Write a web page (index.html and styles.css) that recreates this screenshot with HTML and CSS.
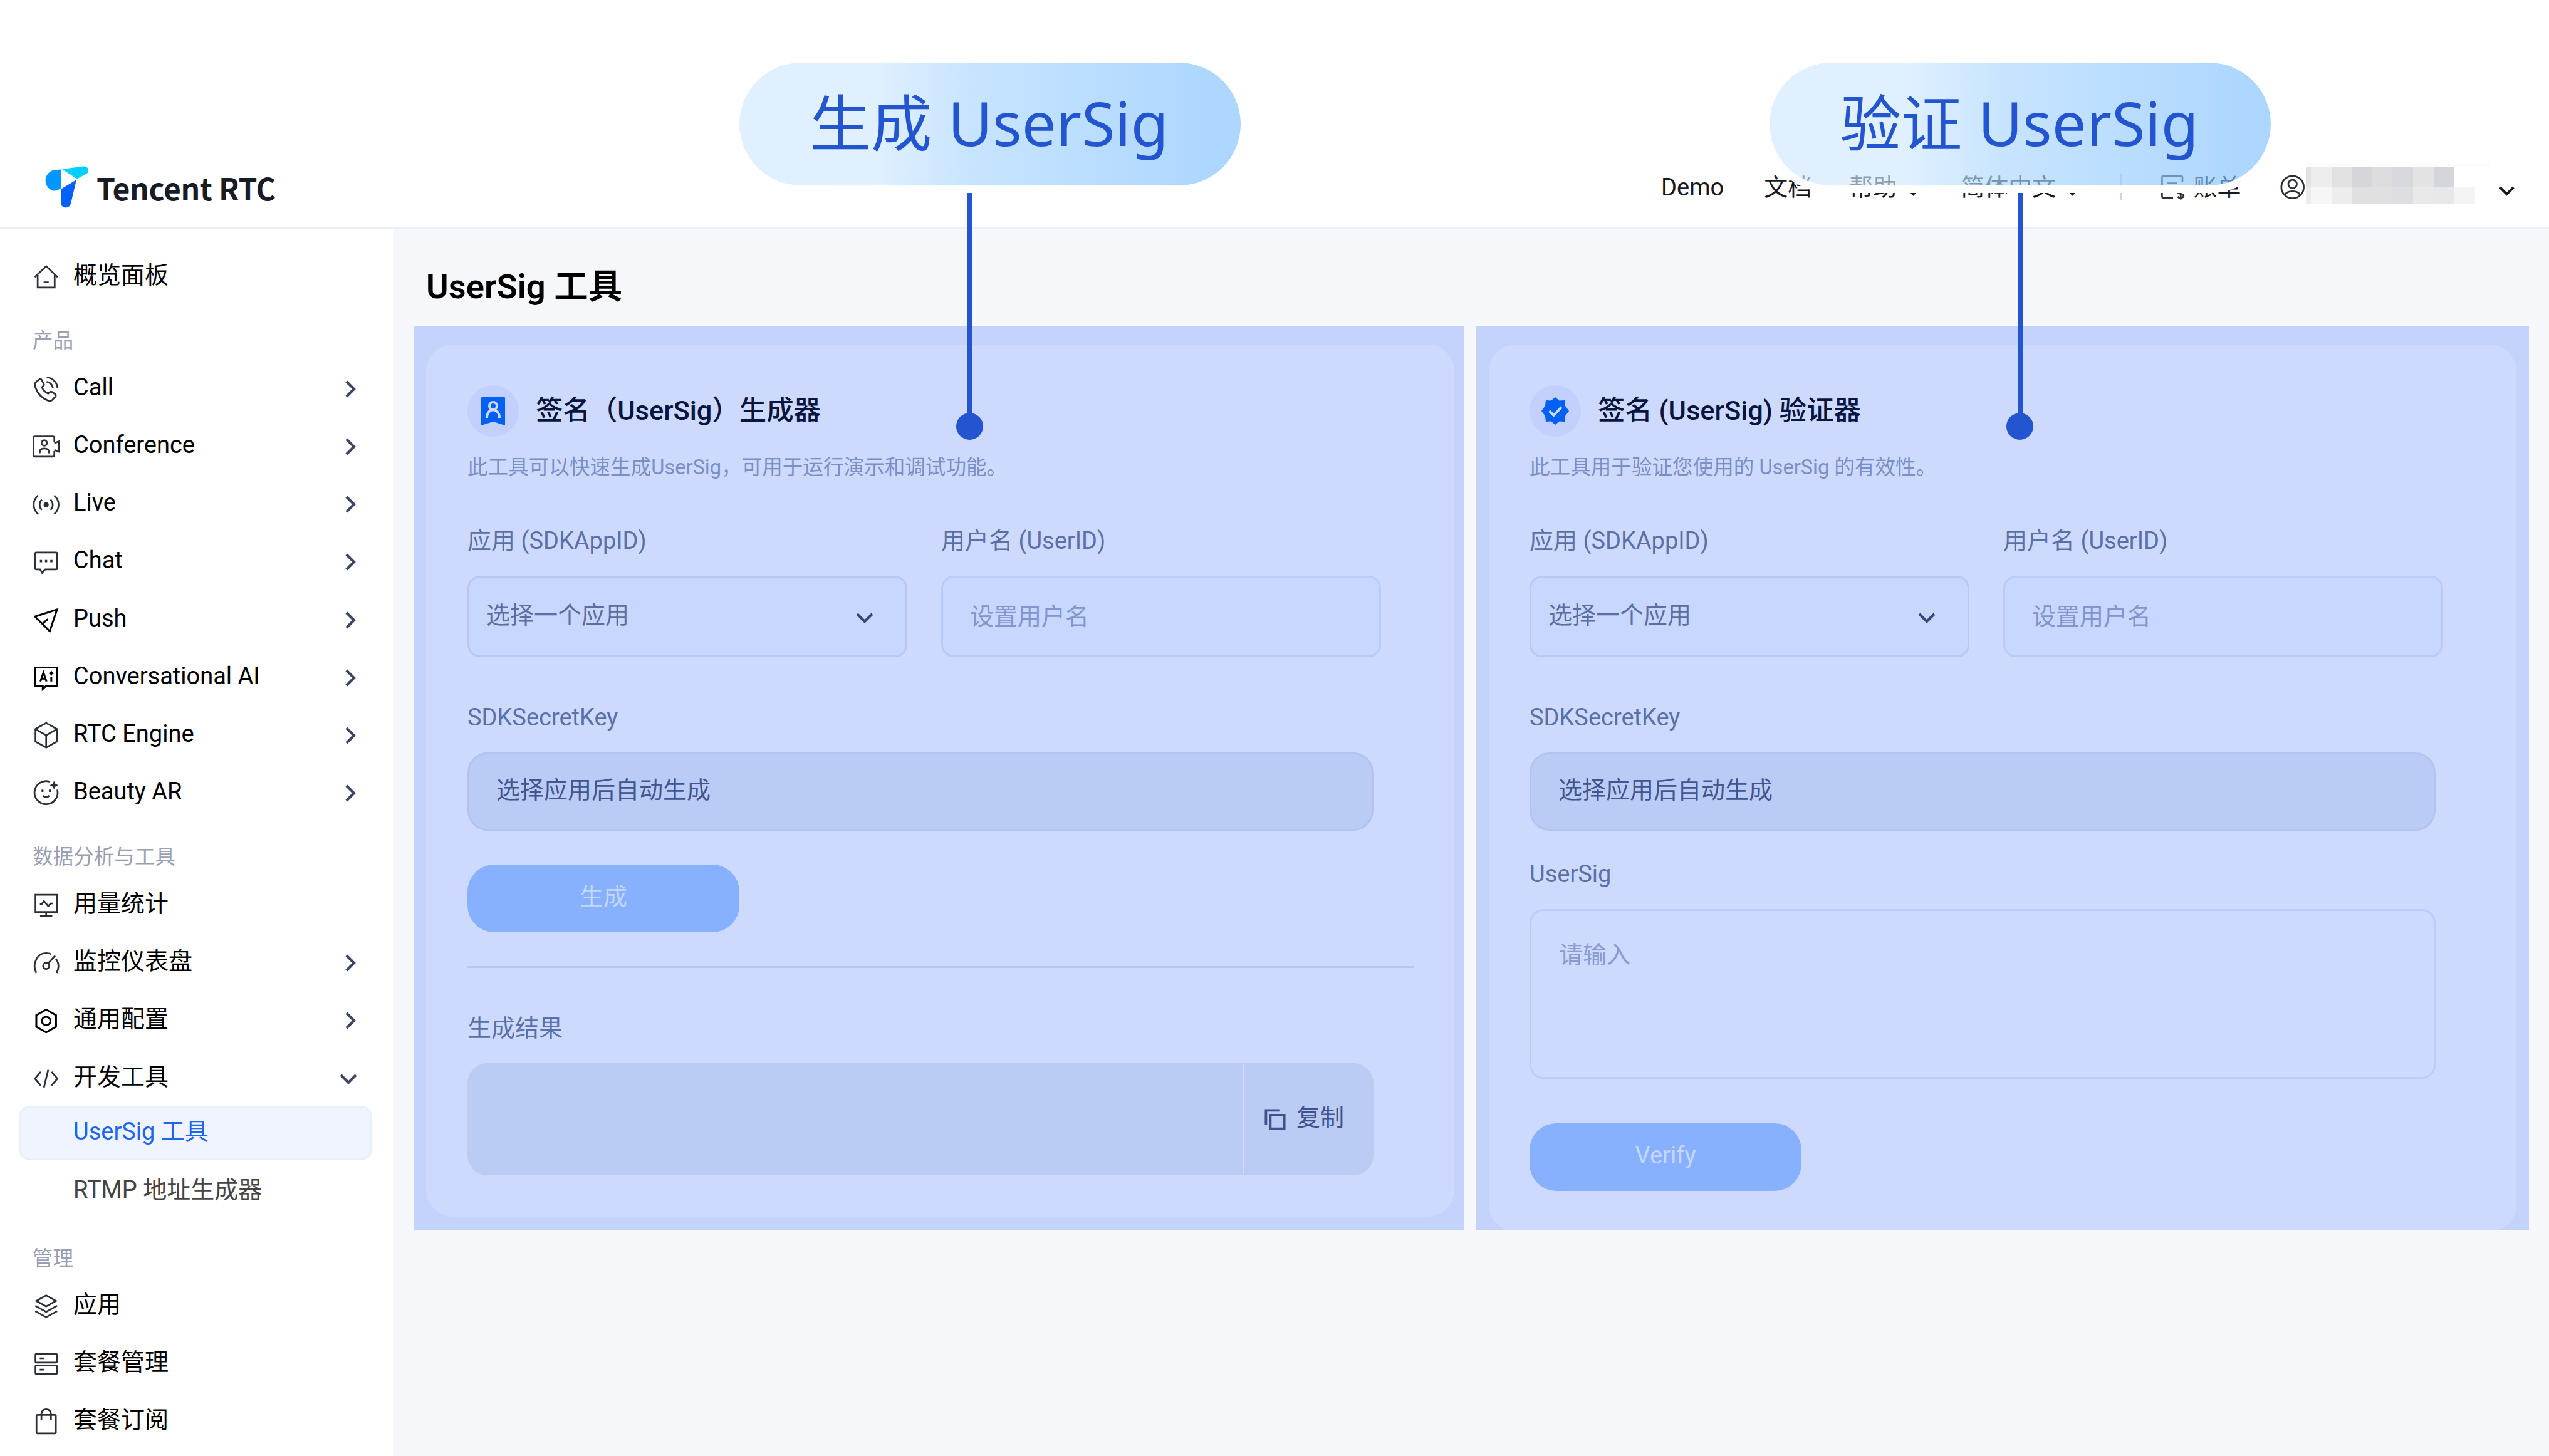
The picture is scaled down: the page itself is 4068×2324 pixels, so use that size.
FILE: index.html
```html
<!DOCTYPE html>
<html lang="zh-CN">
<head>
  <meta charset="UTF-8">
  <meta name="viewport" content="width=device-width, initial-scale=1.0">
  <title>UserSig 工具 - Tencent RTC</title>
  <link rel="stylesheet" href="styles.css">
</head>
<body>
  <!-- shared arrows -->
  <svg class="defs" width="0" height="0">
    <symbol id="right" viewBox="0 0 16 16"><path d="M6.300 4l4 4-4 4"/></symbol>
    <symbol id="down" viewBox="0 0 16 16"><path d="M4 6l4 4 4-4"/></symbol>
  </svg>

  <header class="header">
    <a class="logo">
      <svg class="logo-mark" viewBox="0 0 72 67">
        <path fill="#0096ff" d="M28 5.500v30C24 38.500 20 40 16 39.500A17 17 0 0 1 17 6.500z"/>
        <path fill="#00cfff" d="M30 5L64 .5c8-.5 11 8 5 12L54 20.500z"/>
        <path fill="#0061ff" d="M28 37L53 22l-9 38c-2 8-14 9-16 0z"/>
      </svg>
      <span class="logo-text">Tencent RTC</span>
    </a>
    <nav class="topnav">
      <a class="demo">Demo</a>
      <a class="docs">文档</a>
      <a class="help">帮助<svg class="caret"><use href="#down"/></svg></a>
      <a class="lang">简体中文<svg class="caret"><use href="#down"/></svg></a>
      <span class="split"></span>
      <a class="bill">
        <svg class="icon" viewBox="0 0 16 16"><path d="M8.500 14.300H2.800a.8.800 0 0 1-.8-.8V2.300a.8.800 0 0 1 .8-.8h10.400a.8.800 0 0 1 .8.800v2.500M5 5.800h6M5 9h3.500"/><path d="M14.600 10.200c-.8-.9-3.400-.7-3.300.7.100 1.500 3.400.8 3.400 2.300 0 1.300-2.700 1.500-3.500.4M13 9v6.300"/></svg>
        账单
      </a>
      <a class="account">
        <svg class="icon" viewBox="0 0 16 16"><circle cx="8" cy="8" r="6.600"/><circle cx="8" cy="6.200" r="2.500"/><path d="M3.600 12.600c.6-1.600 2-2.100 4.400-2.100s3.800.5 4.400 2.100"/></svg>
      </a>
      <svg class="masked" viewBox="0 0 294 66">
        <path fill="#fcfcfc" d="M0 0h294v6H0z"/>
        <path fill="#e3e3e3" d="M0 6h8v32H0z"/>
        <path fill="#ededed" d="M8 6h33v32H8z"/>
        <path fill="#e1e1e3" d="M41 6h32v32H41z"/>
        <path fill="#d5d6da" d="M73 6h33v32H73z"/>
        <path fill="#dddde0" d="M106 6h32v32h-32z"/>
        <path fill="#d8d9df" d="M138 6h33v32h-33z"/>
        <path fill="#e3e3e3" d="M171 6h33v32h-33z"/>
        <path fill="#d5d6db" d="M204 6h33v32h-33z"/>
        <path fill="#ececec" d="M0 38h8v28H0z"/>
        <path fill="#f6f6f6" d="M8 38h33v28H8z"/>
        <path fill="#ededed" d="M41 38h32v28H41z"/>
        <path fill="#e0e0e0" d="M73 38h65v28H73z"/>
        <path fill="#dcdee2" d="M138 38h33v28h-33z"/>
        <path fill="#e9e9e9" d="M171 38h33v28h-33z"/>
        <path fill="#e6e8e9" d="M204 38h33v28h-33z"/>
        <path fill="#f4f4f4" d="M237 38h33v28h-33z"/>
      </svg>
      <svg class="caret caret-user"><use href="#down"/></svg>
    </nav>
  </header>

  <div class="layout">
    <aside class="sidebar">
      <a class="item">
        <svg class="icon" viewBox="0 0 16 16"><path d="M1.300 8.200L8 1.800l6.700 6.400M3 7v7.300h10V7M6.500 11.300h3"/></svg>
        <span>概览面板</span>
      </a>

      <div class="group">产品</div>
      <a class="item">
        <svg class="icon" viewBox="0 0 16 16"><path d="M3.900 2.500l-2 1.600c-.7.700-.6 1.900-.2 3.100 1.300 3.600 4.200 6.600 7.800 7.900.8.200 1.500 0 2-.5l1.900-2c.4-.5.3-1.100-.1-1.500l-1.900-1.300c-.5-.3-1-.2-1.400.2l-.9.800C7.500 10 6.200 8.700 5.500 7.100l.9-.9c.4-.4.4-.9.1-1.300L5.300 2.700c-.3-.5-1-.6-1.400-.2zM8.300 1.200c3.400.2 6.200 3 6.400 6.400M8.300 3.900c2 .2 3.500 1.700 3.700 3.700"/></svg>
        <span>Call</span>
        <svg class="arrow"><use href="#right"/></svg>
      </a>
      <a class="item">
        <svg class="icon" viewBox="0 0 16 16"><path d="M12.800 5.500V2.900a.8.800 0 0 0-.8-.8H1.400a.8.800 0 0 0-.8.800v10.300c0 .4.300.8.800.8H12c.5 0 .8-.4.800-.8v-2.500M12.800 6l2.600-1v6l-2.600-1"/><circle cx="6.900" cy="5.900" r="1.600"/><path d="M4.200 12v-.8c0-1.300.9-2 2.700-2s2.700.7 2.700 2v.8"/></svg>
        <span>Conference</span>
        <svg class="arrow"><use href="#right"/></svg>
      </a>
      <a class="item">
        <svg class="icon" viewBox="0 0 16 16"><circle cx="8" cy="8" r="1" fill="currentColor"/><path d="M5.500 5c-1.800 1.600-1.800 4.400 0 6M10.500 5c1.800 1.600 1.800 4.400 0 6M3.300 2.500C-.2 5.500-.2 10.500 3.300 13.500M12.700 2.500c3.500 3 3.500 8 0 11"/></svg>
        <span>Live</span>
        <svg class="arrow"><use href="#right"/></svg>
      </a>
      <a class="item">
        <svg class="icon" viewBox="0 0 16 16"><path d="M2.200 2.200h11.600a.6.600 0 0 1 .6.600v8.700a.6.600 0 0 1-.6.600H7.500l-1.900 2-1.200-2H2.200a.6.600 0 0 1-.6-.6V2.800a.6.600 0 0 1 .6-.6z"/><path class="dots" d="M4.300 7.200h1.300M7.300 7.200h1.300M10.400 7.200h1.300"/></svg>
        <span>Chat</span>
        <svg class="arrow"><use href="#right"/></svg>
      </a>
      <a class="item">
        <svg class="icon black" viewBox="0 0 16 16"><path d="M14.400 1.800L1.400 6l8.700 8.600zM5.800 10.200L9 7.500"/></svg>
        <span>Push</span>
        <svg class="arrow"><use href="#right"/></svg>
      </a>
      <a class="item">
        <svg class="icon black" viewBox="0 0 16 16"><path d="M1.500 2h13v10.800H8l-2 1.900V12.800H1.500z"/><path d="M4.600 10.200L6.400 5l1.800 5.200M5.200 8.600h2.400M11 7.700v2.500"/><path fill="currentColor" stroke="none" d="M11 3.600l.6 1.200 1.200.6-1.200.6-.6 1.200-.6-1.200-1.200-.6 1.200-.6z"/></svg>
        <span>Conversational AI</span>
        <svg class="arrow"><use href="#right"/></svg>
      </a>
      <a class="item">
        <svg class="icon" viewBox="0 0 16 16"><path d="M8 .8l6.300 3.500v7.400L8 15.200l-6.300-3.500V4.300zM1.700 4.400L8 7.900l6.300-3.500M8 7.900v7.300"/></svg>
        <span>RTC Engine</span>
        <svg class="arrow"><use href="#right"/></svg>
      </a>
      <a class="item">
        <svg class="icon" viewBox="0 0 16 16"><path d="M10.200 1.400A6.800 6.800 0 1 0 14.500 6M6.200 9.500c.7 1.200 2.900 1.200 3.600 0"/><path class="dots" d="M5.300 6.700h1.100M9.600 6.700h1.100"/><path fill="currentColor" stroke="none" d="M12.600.9l.8 1.700 1.700.8-1.700.8-.8 1.700-.8-1.700-1.700-.8 1.700-.8z"/></svg>
        <span>Beauty AR</span>
        <svg class="arrow"><use href="#right"/></svg>
      </a>

      <div class="group">数据分析与工具</div>
      <a class="item">
        <svg class="icon" viewBox="0 0 16 16"><path d="M1.700 1.900h12.600V12H1.700zM4.400 14.400h7.200M8 12v2.400M4.300 7.500h1L6.700 5.600l2.500 3L10.600 7h1.200"/></svg>
        <span>用量统计</span>
      </a>
      <a class="item">
        <svg class="icon" viewBox="0 0 16 16"><path d="M2.200 14C-.6 8.500 2.900 2.300 8 2.300c1 0 2 .2 2.800.6M13.700 5.600c1.900 2.600 1.900 5.700.4 8.400M9.100 8.400l4.200-4.600"/><circle cx="8" cy="9.900" r="1.800"/></svg>
        <span>监控仪表盘</span>
        <svg class="arrow"><use href="#right"/></svg>
      </a>
      <a class="item">
        <svg class="icon black" viewBox="0 0 16 16"><path d="M8 1.300l5.800 3.300v6.800L8 14.700l-5.800-3.300V4.600z"/><circle cx="8" cy="8" r="2.500"/></svg>
        <span>通用配置</span>
        <svg class="arrow"><use href="#right"/></svg>
      </a>
      <a class="item">
        <svg class="icon" viewBox="0 0 16 16"><path d="M4.800 4L1.400 8l3.400 4M11.200 4l3.400 4-3.400 4M9.200 2.800L6.700 13.200"/></svg>
        <span>开发工具</span>
        <svg class="arrow arrow-open"><use href="#down"/></svg>
      </a>
      <a class="subitem active">UserSig 工具</a>
      <a class="subitem">RTMP 地址生成器</a>

      <div class="group group-last">管理</div>
      <a class="item">
        <svg class="icon" viewBox="0 0 16 16"><path d="M8 1.700L13.800 5 8 8.200 2.200 5zM1.600 7.800L8 11.400l6.400-3.600M1.600 11L8 14.500l6.400-3.500"/></svg>
        <span>应用</span>
      </a>
      <a class="item">
        <svg class="icon" viewBox="0 0 16 16"><rect x="1.700" y="2.200" width="12.600" height="5.100" rx=".7"/><rect x="1.700" y="9" width="12.600" height="5.100" rx=".7"/><path d="M4.200 4.800h2.500M4.200 11.500h2.500"/></svg>
        <span>套餐管理</span>
      </a>
      <a class="item">
        <svg class="icon" viewBox="0 0 16 16"><rect x="2.300" y="4.200" width="11.400" height="10.900" rx=".6"/><path d="M5.200 7V3.600C5.200-.1 10.800-.1 10.800 3.600V7"/></svg>
        <span>套餐订阅</span>
      </a>
    </aside>

    <main class="main">
      <h1>UserSig 工具</h1>
      <div class="panels">
        <section class="panel panel-left">
          <div class="card">
            <div class="card-head">
              <span class="badge">
                <svg viewBox="0 0 38 46"><path fill="#0060f5" d="M3 0h32a3 3 0 0 1 3 3v43l-19-6-19 6V3a3 3 0 0 1 3-3z"/><g fill="none" stroke="#cddafe" stroke-width="4"><circle cx="19" cy="15" r="6"/><path d="M9 34c0-17 20-17 20 0"/></g></svg>
              </span>
              <h2>签名（UserSig）生成器</h2>
            </div>
            <p class="desc">此工具可以快速生成UserSig，可用于运行演示和调试功能。</p>
            <div class="row">
              <div class="field">
                <label>应用 (SDKAppID)</label>
                <div class="select">选择一个应用<svg><use href="#down"/></svg></div>
              </div>
              <div class="field">
                <label>用户名 (UserID)</label>
                <div class="input">设置用户名</div>
              </div>
            </div>
            <label class="label-key">SDKSecretKey</label>
            <div class="readonly">选择应用后自动生成</div>
            <div class="button">生成</div>
            <div class="divider"></div>
            <label class="label-result">生成结果</label>
            <div class="result">
              <div class="copy">
                <svg viewBox="0 0 16 16"><path d="M1.500 11.500v-10h9.500M4.600 4.800h9.900v9.700H4.600z"/></svg>
                复制
              </div>
            </div>
          </div>
        </section>

        <section class="panel panel-right">
          <div class="card">
            <div class="card-head">
              <span class="badge">
                <svg viewBox="0 0 44 44"><path fill="#0060f5" d="M22 0l6.500 5.500 8.500-.5 1 9L44 22l-6 8-1 9-8.500-.5L22 44l-6.500-5.500-8.500.5-1-9L0 22l6-8 1-9 8.500.5z"/><path fill="none" stroke="#cddafe" stroke-width="4" d="M12.500 22l7 7L32 16"/></svg>
              </span>
              <h2>签名 (UserSig) 验证器</h2>
            </div>
            <p class="desc">此工具用于验证您使用的 UserSig 的有效性。</p>
            <div class="row">
              <div class="field">
                <label>应用 (SDKAppID)</label>
                <div class="select">选择一个应用<svg><use href="#down"/></svg></div>
              </div>
              <div class="field">
                <label>用户名 (UserID)</label>
                <div class="input">设置用户名</div>
              </div>
            </div>
            <label class="label-key">SDKSecretKey</label>
            <div class="readonly">选择应用后自动生成</div>
            <label class="label-sig">UserSig</label>
            <div class="textarea">请输入</div>
            <div class="button button-verify">Verify</div>
          </div>
        </section>
      </div>
    </main>
  </div>

  <!-- callouts over the page -->
  <div class="callout callout-generate">
    <div class="pill">生成 UserSig</div>
    <div class="line"></div>
    <div class="dot"></div>
  </div>
  <div class="callout callout-verify">
    <div class="pill">验证 UserSig</div>
    <div class="line"></div>
    <div class="dot"></div>
  </div>
</body>
</html>
```
FILE: styles.css
```css
* {
  box-sizing: border-box;
}

body {
  margin: 0;
  width: 4068px;
  height: 2324px;
  overflow: hidden;
  position: relative;
  background: #fff;
  color: #000;
  font-family: Roboto, "Noto Sans CJK SC", sans-serif;
  font-size: 38px;
  line-height: 52px;
}

h1, h2, p {
  margin: 0;
}

svg {
  display: block;
  flex: none;
}

label {
  display: block;
  color: #5c70a8;
}

.defs {
  position: absolute;
}

.icon {
  width: 43.4px;
  height: 43.4px;
  fill: none;
  stroke: #2a2f3a;
  color: #2a2f3a;
  stroke-width: 1;
}

.icon.black {
  stroke: #000;
  color: #000;
  stroke-width: 1.1;
}

.icon .dots {
  stroke-width: 1.4;
}

/* header */
.header {
  display: flex;
  justify-content: space-between;
  height: 366px;
  padding: 234px 46px 0 69px;
  border-bottom: 3px solid #ebeff7;
}

.logo {
  display: flex;
  height: 129px;
  gap: 13px;
  align-items: center;
}

.logo-mark {
  width: 72px;
  height: 67px;
}

.logo-text {
  font-family: "Noto Sans CJK SC", sans-serif;
  font-size: 48px;
  font-weight: 700;
  letter-spacing: -0.4px;
  color: #171c26;
}

.topnav {
  display: flex;
  align-items: center;
  height: 129px;
  color: #16181d;
}

.topnav a {
  display: flex;
  align-items: center;
}

.caret {
  width: 43px;
  height: 43px;
  margin-top: 11px;
  fill: none;
  stroke: #16181d;
  stroke-width: 1.5;
}

.demo {
  margin-right: 64px;
}

.docs {
  margin-right: 60px;
}

.help {
  margin-right: 54px;
}

.help .caret,
.lang .caret {
  margin-left: 5px;
}

.lang {
  margin-right: 55px;
}

.split {
  width: 3px;
  height: 43px;
  margin-right: 58px;
  background: #d0d3d9;
}

.bill {
  gap: 12px;
  margin-right: 60px;
}

.masked {
  width: 294px;
  height: 66px;
  margin-bottom: 11px;
}

.caret-user {
  margin-left: 5px;
}

/* sidebar */
.layout {
  display: flex;
  height: 1958px;
}

.sidebar {
  width: 627px;
  padding-top: 30px;
  background: #fff;
}

.item {
  display: flex;
  align-items: center;
  height: 92.2px;
  padding: 0 45px 0 52px;
}

.item span {
  flex: 1;
  margin-left: 21.6px;
  margin-top: -6px;
}

.arrow {
  width: 48px;
  height: 48px;
  fill: none;
  stroke: #3b4663;
  stroke-width: 1.4;
}

.arrow-open {
  margin-right: 2px;
}

.group {
  height: 86.6px;
  padding: 32px 52px 0;
  line-height: 48px;
  font-size: 32.6px;
  color: #9a9fb3;
}

.group-last {
  height: 91px;
  padding-top: 37px;
}

.subitem {
  display: block;
  height: 87.5px;
  margin: -3px 33px 6px 30px;
  padding: 12px 87px 0 84px;
  border: 3px solid transparent;
  border-radius: 18px;
  color: #444;
}

.subitem + .subitem {
  margin-top: 0;
  margin-bottom: 2px;
}

.subitem.active {
  background: #f0f4ff;
  border-color: #e6f0ff;
  color: #1c66f0;
}

/* content */
.main {
  flex: 1;
  padding: 0 32px 0 33px;
  background: #f5f7fb;
}

h1 {
  height: 154px;
  padding: 62px 20px 0;
  font-size: 54.4px;
  line-height: 60px;
  font-weight: 600;
}

.panels {
  display: flex;
  gap: 20px;
}

.panel {
  height: 1443px;
  overflow: hidden;
  background: #c4d3fc;
}

.panel-left {
  width: 1676px;
  padding: 30px 15px 0 20px;
}

.panel-right {
  width: 1680px;
  padding: 30px 20px 0 20px;
}

.card {
  height: 1392px;
  padding: 65px 65px 0 66px;
  border-radius: 43px;
  background: #cddafe;
}

.panel-right .card {
  height: 1416px;
  padding-left: 65px;
}

.card-head {
  display: flex;
  align-items: center;
  height: 82px;
}

.badge {
  display: flex;
  align-items: center;
  justify-content: center;
  width: 82px;
  height: 82px;
  border-radius: 50%;
  background: #c3d0fe;
}

.badge svg {
  width: 44px;
  height: 46px;
}

h2 {
  margin-left: 27px;
  font-size: 43.4px;
  font-weight: 500;
  color: #07153f;
}

.desc {
  margin-top: 27px;
  font-size: 32.6px;
  line-height: 44px;
  color: #7b8fc6;
}

.row {
  display: flex;
  gap: 54px;
  margin-top: 69px;
}

.field {
  width: 702px;
}

.select,
.input {
  display: flex;
  align-items: center;
  height: 130px;
  margin-top: 30px;
  border: 3px solid #b8c8f4;
  border-radius: 20px;
  background: #c8d7fd;
}

.select {
  justify-content: space-between;
  padding: 0 41px 4px 27px;
  color: #5b6da3;
}

.select svg {
  width: 48px;
  height: 48px;
  margin-top: 8px;
  fill: none;
  stroke: #34467c;
  stroke-width: 1.4;
}

.input {
  padding-left: 43px;
  border-color: #b9cafb;
  color: #8295d0;
}

.label-key {
  margin-top: 70px;
}

.readonly {
  width: 1446px;
  height: 125px;
  margin-top: 30px;
  padding: 31px 43px;
  border: 3px solid #b1c4f0;
  border-radius: 32px;
  background: #baccf5;
  color: #41558f;
}

.button {
  width: 434px;
  height: 108px;
  margin-top: 54px;
  padding-top: 25px;
  border-radius: 43px;
  background: #87b1ff;
  color: #c5d7ff;
  text-align: center;
}

.divider {
  width: 1510px;
  height: 3px;
  margin-top: 54px;
  background: #b4c8f5;
}

.label-result {
  margin-top: 70px;
}

.result {
  display: flex;
  justify-content: flex-end;
  width: 1446px;
  height: 179px;
  margin-top: 30px;
  padding: 2px 0;
  border-radius: 32px;
  background: #baccf4;
}

.copy {
  display: flex;
  align-items: center;
  gap: 16px;
  width: 208px;
  padding: 0 0 6px 31px;
  border-left: 2px solid #cddafe;
  color: #3f528c;
}

.copy svg {
  width: 36px;
  height: 36px;
  margin-top: 7px;
  fill: none;
  stroke: #3f528c;
  stroke-width: 1.7;
}

.label-sig {
  margin-top: 43px;
}

.textarea {
  width: 1446px;
  height: 271px;
  margin-top: 30px;
  padding: 44px 44px;
  border: 3px solid #bccbf9;
  border-radius: 22px;
  color: #8a9bd4;
}

.button-verify {
  margin-top: 71px;
}

/* callouts */
.callout {
  position: absolute;
  top: 100px;
  width: 800px;
}

.callout-generate {
  left: 1180px;
}

.callout-verify {
  left: 2824px;
}

.pill {
  height: 196px;
  padding-right: 3px;
  border-radius: 98px;
  background: linear-gradient(90deg, rgba(207, 232, 255, .65) 27%, rgba(170, 214, 255, .65) 46%, rgba(129, 193, 255, .65) 95%);
  box-shadow: 0 0 0 12px #fff;
  font-family: "Noto Sans", "Noto Sans CJK SC", sans-serif;
  font-size: 97.5px;
  line-height: 192px;
  color: #2355d1;
  text-align: center;
}

.line {
  width: 8px;
  height: 372px;
  margin: 12px 0 0 364px;
  background: #2355d1;
}

.dot {
  width: 43px;
  height: 43px;
  margin: -21px 0 0 346px;
  border-radius: 50%;
  background: #2355d1;
}

.callout-verify .line {
  margin-left: 396px;
}

.callout-verify .dot {
  margin-left: 378px;
}
```
